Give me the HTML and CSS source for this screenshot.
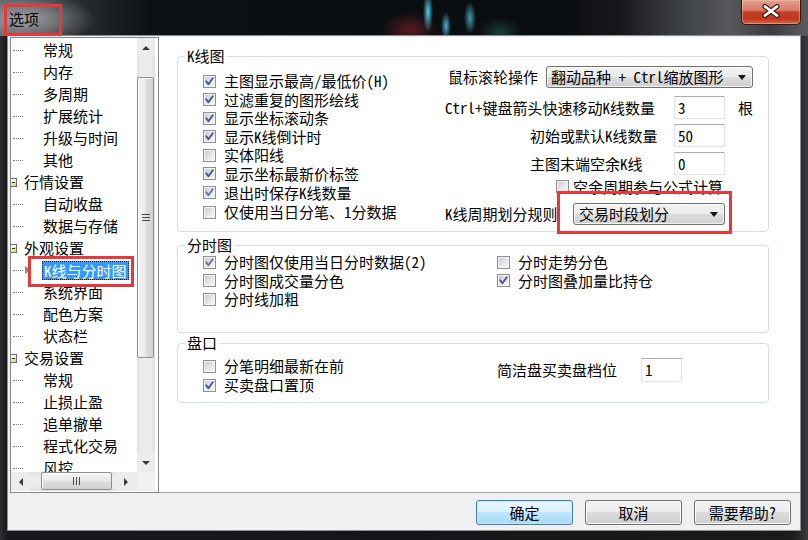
FILE: index.html
```html
<!DOCTYPE html>
<html lang="zh-CN">
<head>
<meta charset="utf-8">
<title>选项</title>
<link rel="stylesheet" href="styles.css">
</head>
<body>
<div class="window">
  <div class="titlebar">
    <span class="title">选项</span>
    <div class="close-btn">
      <svg width="60" height="24" viewBox="0 0 60 24"><path d="M24 7.5L36 16.5M36 7.5L24 16.5" stroke="#3a2320" stroke-width="5.2" stroke-linecap="round"/><path d="M24 7.5L36 16.5M36 7.5L24 16.5" stroke="#ffffff" stroke-width="2.8" stroke-linecap="round"/></svg>
    </div>
  </div>
  <div class="frame-mid">
    <div class="client">
      <div class="main">
        <div class="tree-panel">
          <div class="tree-body">
            <ul class="tree">
              <li class="node child"><i class="dots"></i><span>常规</span></li>
              <li class="node child"><i class="dots"></i><span>内存</span></li>
              <li class="node child"><i class="dots"></i><span>多周期</span></li>
              <li class="node child"><i class="dots"></i><span>扩展统计</span></li>
              <li class="node child"><i class="dots"></i><span>升级与时间</span></li>
              <li class="node child"><i class="dots"></i><span>其他</span></li>
              <li class="node parent"><i class="exp"></i><span>行情设置</span></li>
              <li class="node child"><i class="dots"></i><span>自动收盘</span></li>
              <li class="node child"><i class="dots"></i><span>数据与存储</span></li>
              <li class="node parent"><i class="exp"></i><span>外观设置</span></li>
              <li class="node child sel"><i class="dots"></i><i class="ptr"></i><span class="hl">K线与分时图</span></li>
              <li class="node child"><i class="dots"></i><span>系统界面</span></li>
              <li class="node child"><i class="dots"></i><span>配色方案</span></li>
              <li class="node child"><i class="dots"></i><span>状态栏</span></li>
              <li class="node parent"><i class="exp"></i><span>交易设置</span></li>
              <li class="node child"><i class="dots"></i><span>常规</span></li>
              <li class="node child"><i class="dots"></i><span>止损止盈</span></li>
              <li class="node child"><i class="dots"></i><span>追单撤单</span></li>
              <li class="node child"><i class="dots"></i><span>程式化交易</span></li>
              <li class="node child"><i class="dots"></i><span>风控</span></li>
            </ul>
            <div class="vscroll">
              <div class="sb-btn"><i class="arr up"></i></div>
              <div class="sb-track">
                <div class="thumb-v"><svg width="8" height="7" viewBox="0 0 8 7"><path d="M0 .5h8M0 3.5h8M0 6.5h8" stroke="#4a4a4a"/></svg></div>
              </div>
              <div class="sb-btn"><i class="arr down"></i></div>
            </div>
          </div>
          <div class="hscroll-row">
            <div class="hscroll">
              <div class="sb-btn hl-btn"><i class="arr left"></i></div>
              <div class="sb-track htrack">
                <div class="thumb-h"><svg width="7" height="8" viewBox="0 0 7 8"><path d="M.5 0v8M3.5 0v8M6.5 0v8" stroke="#4a4a4a"/></svg></div>
              </div>
              <div class="sb-btn hr-btn"><i class="arr right"></i></div>
            </div>
            <div class="sb-corner"></div>
          </div>
        </div>

        <div class="pane">
          <fieldset class="group g-kline">
            <legend>K线图</legend>
            <div class="kline-body">
              <div class="col-left">
                <div class="chk-row"><span class="cb on"><svg viewBox="0 0 13 13"><path d="M3.2 6.3L5.4 9.2L9.8 3.2"/></svg></span><span>主图显示最高/最低价(H)</span></div>
                <div class="chk-row"><span class="cb on"><svg viewBox="0 0 13 13"><path d="M3.2 6.3L5.4 9.2L9.8 3.2"/></svg></span><span>过滤重复的图形绘线</span></div>
                <div class="chk-row"><span class="cb on"><svg viewBox="0 0 13 13"><path d="M3.2 6.3L5.4 9.2L9.8 3.2"/></svg></span><span>显示坐标滚动条</span></div>
                <div class="chk-row"><span class="cb on"><svg viewBox="0 0 13 13"><path d="M3.2 6.3L5.4 9.2L9.8 3.2"/></svg></span><span>显示K线倒计时</span></div>
                <div class="chk-row"><span class="cb"></span><span>实体阳线</span></div>
                <div class="chk-row"><span class="cb on"><svg viewBox="0 0 13 13"><path d="M3.2 6.3L5.4 9.2L9.8 3.2"/></svg></span><span>显示坐标最新价标签</span></div>
                <div class="chk-row tall"><span class="cb on light"><svg viewBox="0 0 13 13"><path d="M3.2 6.3L5.4 9.2L9.8 3.2"/></svg></span><span>退出时保存K线数量</span></div>
                <div class="chk-row last"><span class="cb"></span><span>仅使用当日分笔、1分数据</span></div>
              </div>
              <div class="col-right">
                <div class="r-row r1">
                  <span class="lbl-wheel">鼠标滚轮操作</span>
                  <div class="combo c-wheel"><span>翻动品种 + Ctrl缩放图形</span><i class="arr down"></i></div>
                </div>
                <div class="r-row r2">
                  <span class="lbl-ctrl">Ctrl+键盘箭头快速移动K线数量</span>
                  <div class="edit">3</div>
                  <span class="unit">根</span>
                </div>
                <div class="r-row r3">
                  <span class="lbl-num">初始或默认K线数量</span>
                  <div class="edit">50</div>
                </div>
                <div class="r-row r3">
                  <span class="lbl-num">主图末端空余K线</span>
                  <div class="edit">0</div>
                </div>
                <div class="r-row r5">
                  <span class="cb"></span><span class="lbl-spare">空余周期参与公式计算</span>
                </div>
                <div class="r-row r6">
                  <span class="lbl-rule">K线周期划分规则</span>
                  <div class="combo c-rule"><span>交易时段划分</span><i class="arr down"></i></div>
                </div>
              </div>
            </div>
          </fieldset>

          <fieldset class="group g-fenshi">
            <legend>分时图</legend>
            <div class="two-col">
              <div class="col-a">
                <div class="chk-row"><span class="cb on light"><svg viewBox="0 0 13 13"><path d="M3.2 6.3L5.4 9.2L9.8 3.2"/></svg></span><span>分时图仅使用当日分时数据(2)</span></div>
                <div class="chk-row"><span class="cb"></span><span>分时图成交量分色</span></div>
                <div class="chk-row"><span class="cb"></span><span>分时线加粗</span></div>
              </div>
              <div class="col-b">
                <div class="chk-row"><span class="cb"></span><span>分时走势分色</span></div>
                <div class="chk-row"><span class="cb on"><svg viewBox="0 0 13 13"><path d="M3.2 6.3L5.4 9.2L9.8 3.2"/></svg></span><span>分时图叠加量比持仓</span></div>
              </div>
            </div>
          </fieldset>

          <fieldset class="group g-pankou">
            <legend>盘口</legend>
            <div class="two-col">
              <div class="col-a pk-a">
                <div class="chk-row"><span class="cb"></span><span>分笔明细最新在前</span></div>
                <div class="chk-row"><span class="cb on"><svg viewBox="0 0 13 13"><path d="M3.2 6.3L5.4 9.2L9.8 3.2"/></svg></span><span>买卖盘口置顶</span></div>
              </div>
              <div class="pk-b">
                <span class="lbl-depth">简洁盘买卖盘档位</span>
                <div class="edit e-depth">1</div>
              </div>
            </div>
          </fieldset>
        </div>
      </div>
      <div class="footer">
        <button class="btn default">确定</button>
        <button class="btn">取消</button>
        <button class="btn">需要帮助?</button>
      </div>
    </div>
  </div>
  <div class="mark mark-title"></div>
  <div class="mark mark-tree"></div>
  <div class="mark mark-combo"></div>
</div>
</body>
</html>
```
FILE: styles.css
```css
* { box-sizing: border-box; }
html, body { margin: 0; padding: 0; }
body {
  width: 808px; height: 540px; overflow: hidden;
  background: #151619;
  font-family: "Noto Sans Mono CJK SC", "Noto Sans CJK SC", sans-serif;
  font-size: 15px; color: #000;
}
.window {
  position: relative; width: 808px; height: 540px;
  display: flex; flex-direction: column;
  background: linear-gradient(90deg, #2c2d30 0, #17181b 8px, #141518 50%, #1b1a1d 792px, #3a3b3e 808px);
}
.titlebar {
  height: 36px; flex: none; display: flex; align-items: flex-start;
  background:
    radial-gradient(70px 26px at 26px 19px, rgba(175,178,182,.85), rgba(175,178,182,0)),
    radial-gradient(5px 20px at 428px 12px, rgba(90,215,245,.95), rgba(90,215,245,0)),
    radial-gradient(5px 14px at 446px 26px, rgba(90,215,245,.8), rgba(90,215,245,0)),
    radial-gradient(6px 16px at 470px 18px, rgba(90,215,245,.7), rgba(90,215,245,0)),
    radial-gradient(28px 18px at 410px 30px, rgba(150,35,45,.55), rgba(150,35,45,0)),
    radial-gradient(22px 14px at 500px 32px, rgba(60,150,120,.35), rgba(60,150,120,0)),
    linear-gradient(90deg, #55585c 0, #2d3033 70px, #0d1013 150px, #0a0d10 560px, #16181b 620px, #3d4043 680px, #56585b 730px, #3a3c3f 770px, #5a5c5f 808px);
}
.title { margin: 9px 0 0 9px; line-height: 20px; font-size: 15px; color: #000; }
.close-btn {
  margin-left: auto; margin-right: 7px;
  width: 60px; height: 25px;
  border: 1px solid #3a1610; border-top: none;
  border-radius: 0 0 5px 5px;
  background: linear-gradient(#e3a190 0, #d77f69 42%, #c4402a 50%, #c0361d 78%, #d8653f 100%);
  box-shadow: inset 0 0 0 1px rgba(255,200,180,.45);
  overflow: hidden;
}
.close-btn svg { display: block; margin: -1px 0 0 -1px; }

.frame-mid { height: 494px; flex: none; padding: 0 8px; }
.client {
  width: 792px; height: 494px; background: #f0f0f0;
  display: flex; flex-direction: column;
  box-shadow: 0 0 0 1px #8d8f92;
}
.main { height: 457px; flex: none; display: flex; padding: 1px 0 0 2px; }

/* tree */
.tree-panel {
  width: 149px; height: 456px;
  border: 1px solid #828790; background: #fff;
  display: flex; flex-direction: column;
}
.tree-body { height: 434px; display: flex; padding-right: 3px; }
.tree {
  list-style: none; margin: 0; padding: 1px 0 0;
  width: 126px; height: 434px; overflow: hidden;
}
.node { height: 22px; line-height: 22px; display: flex; align-items: center; white-space: nowrap; }
.dots { display: block; width: 10px; height: 0; margin-left: 2px; border-top: 1px dotted #7a7a7a; flex: none; }
.child .dots { margin-right: 20px; }
.child.sel .dots { margin-right: 2px; }
.ptr {
  display: block; width: 0; height: 0; flex: none;
  border-top: 4px solid transparent; border-bottom: 4px solid transparent;
  border-left: 6px solid #8a8a8a; margin-right: 11px;
}
.hl {
  background: #3399ff; color: #fff; height: 19px; line-height: 19px;
  padding: 0 2px; outline: 1px dotted #1a1a1a; outline-offset: -1px;
}
.exp {
  display: block; flex: none; width: 8px; height: 9px; margin-left: -2px; margin-right: 7px;
  border: 1px solid #6e6e6e;
  background: linear-gradient(135deg, #fffbe0, #e2d27a);
  box-shadow: inset 2px 3px 0 -1px #fff;
}
.exp::after { content: ""; display: block; width: 3px; height: 1px; margin: 3px 0 0 2px; background: #333; }

.vscroll { width: 18px; height: 434px; display: flex; flex-direction: column; background: #eaeaea; }
.sb-btn { height: 19px; flex: none; display: flex; align-items: center; justify-content: center; background: #ececec; }
.sb-track { flex: 1; background: linear-gradient(90deg, #e1e1e1, #ececec 25%, #ececec 75%, #e1e1e1); }
.thumb-v {
  margin: 20px 0 0 0; width: 17px; height: 281px;
  border: 1px solid #8f8f8f; border-radius: 2px;
  background: linear-gradient(90deg, #f4f4f4 0, #ececec 45%, #dcdcdc 55%, #d2d2d2 100%);
  box-shadow: inset 1px 1px 0 #fff;
  display: flex; align-items: center; justify-content: center;
}
.thumb-v svg, .thumb-h svg { display: block; }
.arr { display: block; width: 0; height: 0; }
.arr.up { border-left: 4px solid transparent; border-right: 4px solid transparent; border-bottom: 4px solid #3a3a3a; }
.arr.down { border-left: 4px solid transparent; border-right: 4px solid transparent; border-top: 4px solid #3a3a3a; }
.arr.left { border-top: 4px solid transparent; border-bottom: 4px solid transparent; border-right: 4px solid #3a3a3a; }
.arr.right { border-top: 4px solid transparent; border-bottom: 4px solid transparent; border-left: 4px solid #3a3a3a; }
.combo .arr.down { border-left-width: 4.5px; border-right-width: 4.5px; border-top: 5px solid #111; }

.hscroll-row { height: 19px; display: flex; }
.hscroll { width: 126px; height: 19px; display: flex; background: #ececec; }
.hscroll .sb-btn { height: 19px; }
.hl-btn { width: 19px; }
.hr-btn { width: 22px; }
.htrack { flex: 1; background: linear-gradient(#e1e1e1, #ececec 25%, #ececec 75%, #e1e1e1); }
.thumb-h {
  margin-left: 11px; width: 71px; height: 18px;
  border: 1px solid #8f8f8f; border-radius: 2px;
  background: linear-gradient(#f4f4f4 0, #ececec 45%, #dcdcdc 55%, #d2d2d2 100%);
  box-shadow: inset 1px 1px 0 #fff;
  display: flex; align-items: center; justify-content: center;
}
.sb-corner { width: 18px; height: 19px; background: #f0f0f0; }

/* right pane */
.pane {
  width: 641px; height: 456px; background: #fff;
  border-bottom: 1px solid #a0a0a0;
  padding: 10px 0 0 18px;
}
.group {
  margin: 0; padding: 0; width: 592px;
  border: 1px solid #d5dfe5; border-radius: 4px;
  min-inline-size: 0;
}
.group legend { margin-left: 7px; padding: 0 2px; line-height: 18px; height: 18px; }
.g-kline { height: 185px; }
.g-fenshi { height: 97px; margin-top: 4px; }
.g-pankou { height: 69px; margin-top: 1px; }

.cb {
  position: relative; flex: none; display: block;
  width: 13px; height: 13px;
  border: 1px solid #8f8f8f; background: #f4f4f4;
}
.cb::before {
  content: ""; position: absolute; left: 1px; top: 1px; width: 9px; height: 9px;
  background: linear-gradient(135deg, #c9cbcd 0, #e6e7e8 55%, #f6f6f6 100%);
}
.cb svg { position: absolute; left: -1px; top: -1px; width: 13px; height: 13px; }
.cb svg path { fill: none; stroke: #41558a; stroke-width: 1.9; stroke-linecap: round; stroke-linejoin: round; }
.cb.light svg path { stroke: #6072a8; }

.chk-row { height: 18.5px; line-height: 18px; display: flex; align-items: center; white-space: nowrap; }
.chk-row .cb { margin-right: 8px; }

.kline-body { display: flex; }
.col-left { width: 241px; margin: 7px 0 0 25px; }
.col-left .tall { height: 19.5px; }
.col-left .last { height: 19px; }
.col-right { width: 320px; }
.r-row { display: flex; align-items: center; white-space: nowrap; line-height: 18px; }
.r1 { height: 22px; margin-top: 1px; }
.lbl-wheel { margin-left: 4px; width: 98px; }
.combo {
  height: 22px; display: flex; align-items: center;
  border: 1px solid #707070; border-radius: 3px;
  background: linear-gradient(#f3f3f3 0, #ebebeb 50%, #dddddd 50%, #cfcfcf 100%);
  box-shadow: inset 0 0 0 1px rgba(255,255,255,.7);
}
.combo span { flex: 1; }
.c-wheel { width: 207px; padding: 0 6px 0 4px; }
.c-rule { width: 152px; padding: 0 6px 0 5px; }
.r2 { height: 23px; margin-top: 8px; }
.lbl-ctrl { margin-left: 1px; width: 229px; }
.edit {
  width: 51px; height: 23px; background: #fff;
  border: 1px solid #e2e3ea; border-top-color: #abadb3;
  padding-left: 3px; line-height: 21px;
}
.unit { margin-left: 13px; }
.r3 { height: 23px; margin-top: 5px; padding-left: 86px; }
.lbl-num { width: 144px; }
.r5 { height: 13px; margin-top: 5px; padding-left: 112px; }
.lbl-spare { margin-left: 4px; }
.r6 { height: 22px; margin-top: 10px; }
.lbl-rule { margin-left: 1px; width: 128px; }

.two-col { display: flex; }
.col-a { width: 294px; margin: -1px 0 0 25px; }
.col-b { margin-top: -1px; }
.pk-a { margin-top: 5px; }
.pk-a .chk-row:last-child { height: 19px; }
.pk-b { display: flex; align-items: center; height: 24px; margin-top: 6px; line-height: 18px; }
.lbl-depth { width: 144px; }
.e-depth { width: 41px; height: 24px; line-height: 22px; }

/* footer */
.footer {
  height: 37px; flex: none; display: flex; justify-content: flex-end;
  gap: 12px; padding: 7px 9px 0 0;
}
.btn {
  width: 97px; height: 25px; margin: 0; padding: 0;
  font-family: inherit; font-size: 15px; line-height: 18px; color: #000;
  border: 1px solid #707070; border-radius: 3px;
  background: linear-gradient(#f2f2f2 0, #ebebeb 50%, #dddddd 50%, #cfcfcf 100%);
  box-shadow: inset 0 0 0 1px #fbfbfb;
}
.btn.default {
  border-color: #3c7fb1;
  background: linear-gradient(#eaf6fd 0, #d9f0fc 50%, #bee6fd 50%, #a7d9f5 100%);
  box-shadow: inset 0 0 0 1px #c5e8fa;
}

/* red annotation boxes */
.mark { position: absolute; border: 3px solid #e8373c; pointer-events: none; }
.mark-title { left: 4px; top: 4px; width: 58px; height: 32px; }
.mark-tree { left: 28px; top: 256px; width: 106px; height: 31px; }
.mark-combo { left: 557px; top: 191px; width: 175px; height: 43px; }
```
